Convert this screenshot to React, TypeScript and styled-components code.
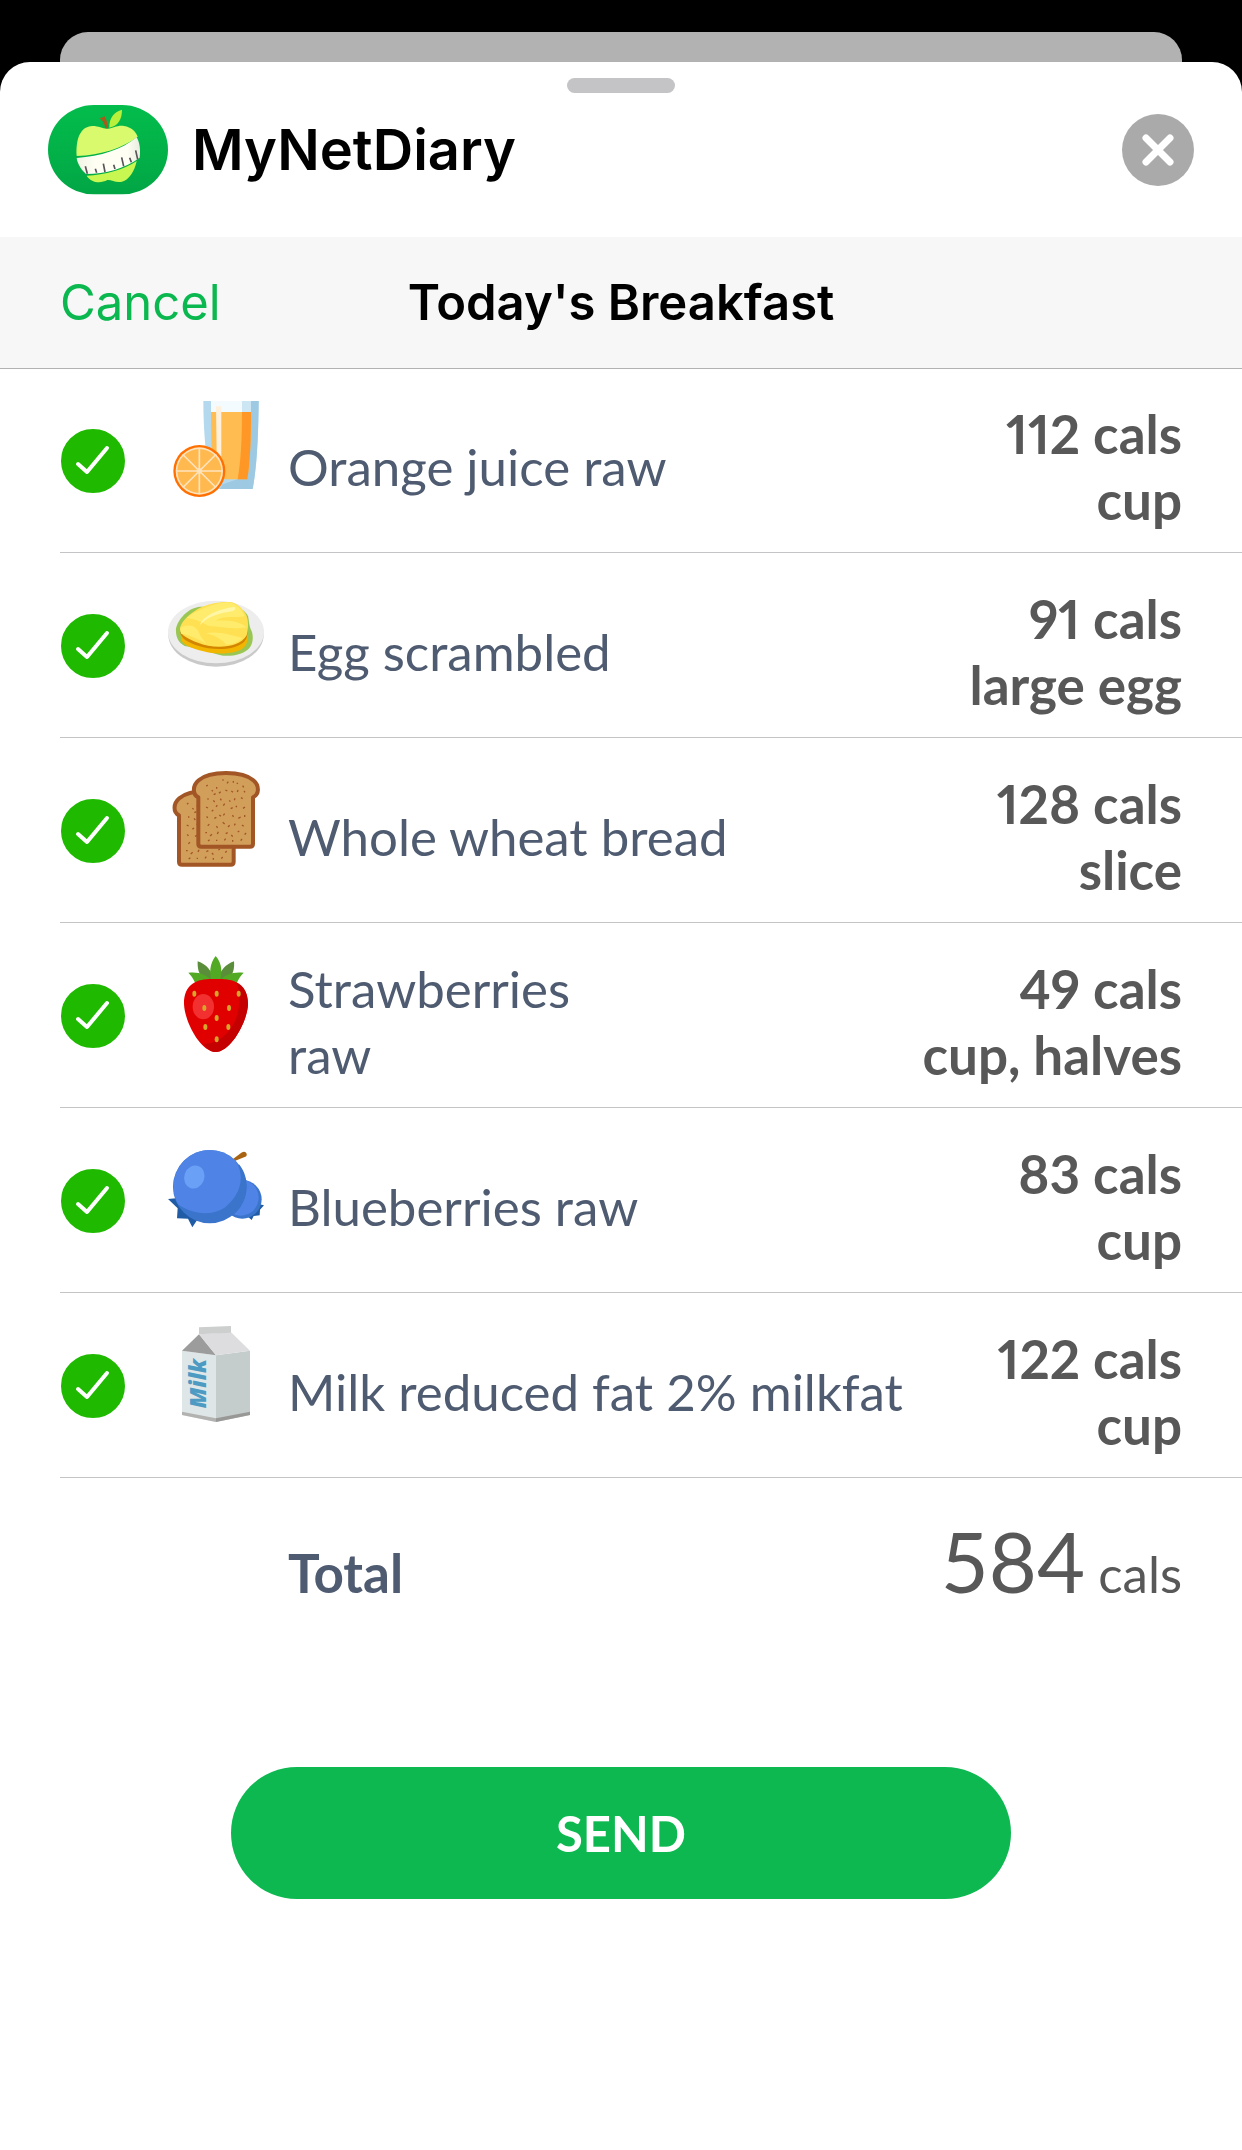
import React, { useState } from 'react';
import styled, { createGlobalStyle } from 'styled-components';

const GlobalStyle = createGlobalStyle`
  *, *::before, *::after { box-sizing: border-box; }
  body { margin: 0; background: #000; }
`;

const systemFont = 'Inter, Roboto, "Liberation Sans", sans-serif';
const brandFont = 'Lato, "Open Sans", "Liberation Sans", sans-serif';

const Page = styled.div`
  min-height: 100vh;
  padding-top: 32px;
  display: flex;
  flex-direction: column;
  background: #000;
`;

const BackSheet = styled.div`
  height: 30px;
  margin: 0 60px;
  background: #b2b2b2;
  border-radius: 28px 28px 0 0;
`;

const Sheet = styled.main`
  flex: 1;
  display: flex;
  flex-direction: column;
  background: #fff;
  border-radius: 30px 30px 0 0;
`;

const Grabber = styled.div`
  width: 108px;
  height: 15px;
  margin: 16px auto 0;
  border-radius: 8px;
  background: #c4c4c6;
`;

const AppHeader = styled.header`
  display: flex;
  align-items: center;
  gap: 24px;
  padding: 12px 48px 42px;
`;

const AppName = styled.h1`
  flex: 1;
  margin: 0;
  font: 600 56px/90px ${systemFont};
  color: #000;
`;

const CloseButton = styled.button`
  width: 72px;
  height: 72px;
  padding: 0;
  border: 0;
  border-radius: 50%;
  background: #aaa;
  cursor: pointer;
`;

const NavBar = styled.nav`
  display: grid;
  grid-template-columns: 1fr auto 1fr;
  align-items: center;
  min-height: 131px;
  padding: 0 60px;
  background: #f7f7f7;
  box-shadow: 0 1px 0 #b2b2b3;
`;

const CancelButton = styled.button`
  justify-self: start;
  padding: 0;
  border: 0;
  background: none;
  font: 400 49px/60px ${systemFont};
  color: #0bb84f;
  cursor: pointer;
`;

const NavTitle = styled.h2`
  margin: 0;
  font: 600 49px/60px ${systemFont};
  color: #000;
`;

const FoodList = styled.ul`
  margin: 0;
  padding: 0 0 0 60px;
  list-style: none;
`;

const FoodRow = styled.li`
  border-bottom: 1px solid #c4c4c6;
`;

const FoodLabel = styled.label`
  display: grid;
  grid-template-columns: 66px 96px 1fr auto;
  align-items: center;
  padding: 33px 60px 19px 0;
  cursor: pointer;
`;

const CheckCell = styled.span`
  display: grid;
  justify-content: center;
  padding-bottom: 12px;

  & > * { grid-area: 1 / 1; }
  & > svg { pointer-events: none; }
`;

const CheckInput = styled.input`
  appearance: none;
  width: 64px;
  height: 64px;
  margin: 0;
  border: 3px solid #c4c4c6;
  border-radius: 50%;
  cursor: pointer;

  &:checked {
    border-color: #1fba00;
    background: #1fba00;
  }
`;

const FoodPicture = styled.svg`
  align-self: start;
  width: 96px;
  height: 96px;
  margin-left: 42px;
  overflow: visible;
`;

const FoodName = styled.span`
  margin-left: 66px;
  font: 400 51px/66px ${brandFont};
  color: #4e5b70;
  white-space: pre-line;
`;

const Amount = styled.span`
  display: flex;
  flex-direction: column;
  align-items: flex-end;
  font: 700 53px/66px ${brandFont};
  font-variant-numeric: proportional-nums;
  color: #585858;
`;

const TotalRow = styled.section`
  display: flex;
  align-items: baseline;
  justify-content: space-between;
  padding: 34px 60px 0 288px;
`;

const TotalLabel = styled.span`
  font: 700 53px/66px ${brandFont};
  color: #4e5b70;
`;

const TotalValue = styled.span`
  font: 400 51px/98px ${brandFont};
  color: #585858;
`;

const TotalNumber = styled.span`
  font-size: 83px;
`;

const Footer = styled.footer`
  display: flex;
  justify-content: center;
  padding: 144px 60px;
`;

const SendButton = styled.button`
  width: 100%;
  max-width: 780px;
  padding: 33px 0;
  border: 0;
  border-radius: 66px;
  background: #0cb84f;
  font: 700 49px/66px ${brandFont};
  color: #fff;
  cursor: pointer;
`;

const Logo = () => (
  <svg width="120" height="90" viewBox="0 0 360 270" aria-hidden="true">
    <defs>
      <linearGradient id="logoGreen" x1="0" y1="0" x2="0" y2="1">
        <stop offset="0" stopColor="#03bd4c" />
        <stop offset="1" stopColor="#02a645" />
      </linearGradient>
      <linearGradient id="tape" x1="0" y1="0" x2="1" y2="0">
        <stop offset="0" stopColor="#f0f3e4" />
        <stop offset="0.3" stopColor="#fffff4" />
        <stop offset="0.8" stopColor="#fffff4" />
        <stop offset="1" stopColor="#e9ecdf" />
      </linearGradient>
    </defs>
    <rect width="360" height="268" rx="138" ry="134" fill="url(#logoGreen)" />
    <path d="M86 153C83 100 98 64 133 63C154 63 163 72 180 71C197 70 207 60 228 63C250 67 263 79 269 95C222 130 160 150 86 153Z" fill="#d9fa6c" />
    <path d="M86 159C158 154 222 134 266 97C275 112 278 134 275 158C232 190 172 207 114 207C98 192 88 175 86 159Z" fill="url(#tape)" />
    <path d="M116 212C170 210 230 194 266 168C260 198 243 225 222 230C202 234 192 224 178 225C160 235 132 236 116 212Z" fill="#c9f751" />
    <path d="M155 40L166 36L170 34C176 46 180 58 180 70H172C170 56 164 46 155 40Z" fill="#a85a1a" />
    <path d="M184 68C183 38 199 20 222 14C222 42 211 62 184 68Z" fill="#b9f03c" />
    <path d="M112 184L118 206M142 191L146 203M166 176L171 201M197 179L201 192M221 157L227 184M245 158L250 172M263 136L269 163" stroke="#59545a" strokeWidth="5" />
  </svg>
);

const CloseIcon = () => (
  <svg width="72" height="72" viewBox="0 0 72 72" aria-hidden="true">
    <path d="M24 24L48 48M48 24L24 48" stroke="#fff" strokeWidth="7" strokeLinecap="round" />
  </svg>
);

const CheckMark = () => (
  <svg width="64" height="64" viewBox="0 0 64 64" fill="none" aria-hidden="true">
    <path d="M17 35L26 43L46 19" stroke="#fff" strokeWidth="4" strokeLinecap="round" strokeLinejoin="round" />
  </svg>
);

const Juice = () => (
  <>
    <path d="M106 0H272C271 90 268 190 254 264H130C114 180 106 90 106 0Z" fill="#b4d9ee" />
    <path d="M222 0H272C271 90 268 190 254 264H156L164 250L208 235Z" fill="#9dc9e3" />
    <path d="M129 0H222V33H129Z" fill="#f3fbfe" />
    <path d="M222 0H249V33H222Z" fill="#cde6f4" />
    <path d="M129 33H249C249 110 247 180 238 235H140C131 180 129 110 129 33Z" fill="#ffbc51" />
    <path d="M222 33H249C249 110 247 180 238 235H209C219 180 222 110 222 33Z" fill="#ff9726" />
    <path d="M144 16H160V190L146 160Z" fill="#fff0db" />
    <circle cx="94" cy="210" r="78" fill="#ff7000" />
    <circle cx="94" cy="210" r="71" fill="#ffe3bd" />
    <circle cx="94" cy="210" r="66" fill="#ffb94f" />
    <path d="M94 142V278M26 210H162M46 162L142 258M142 162L46 258" stroke="#ffe3bd" strokeWidth="5" />
    <circle cx="94" cy="210" r="8" fill="#ffe3bd" />
  </>
);

const Egg = () => (
  <>
    <ellipse cx="144" cy="146" rx="143" ry="96" fill="#c9c9c9" />
    <ellipse cx="144" cy="138" rx="144" ry="94" fill="#ededed" />
    <path d="M24 136C22 108 56 72 80 66C94 60 110 64 130 60C180 48 226 62 240 90C244 106 242 118 252 138C258 160 252 182 238 192C218 208 180 214 152 206C110 194 70 184 50 180C30 170 24 152 24 136Z" fill="#9ac654" />
    <path d="M38 144L239 122C240 150 240 166 232 180C212 206 146 207 106 196C72 188 42 176 40 160Z" fill="#f3b600" />
    <path d="M37 138L240 112C240 146 238 158 228 168C196 196 130 192 92 180C60 170 38 158 37 138Z" fill="#d38500" />
    <path d="M36 132C34 112 62 86 88 70C120 52 156 46 186 48C208 50 222 68 232 82C242 98 242 128 236 148C214 188 136 190 90 170C62 160 38 148 36 132Z" fill="#ffe052" />
    <path d="M56 96C84 74 130 54 176 49C204 50 222 70 230 90C204 98 172 86 142 104C180 102 216 106 236 124C200 132 160 122 124 120C104 112 84 98 56 96Z" fill="#ffec6d" />
    <path d="M37 126C66 110 84 122 92 138C98 152 104 160 114 172C84 156 62 146 40 144Z" fill="#ffec6d" />
    <path d="M112 142C148 134 184 146 224 156C208 170 190 176 176 176C160 160 142 148 112 142Z" fill="#ffec6d" />
    <path d="M96 117C106 88 154 68 200 63C206 72 196 76 180 78C140 84 116 96 96 117Z" fill="#fff6a6" />
  </>
);

const SLICE =
  'M91 79C73 70 73 44 92 28C112 10 145 6 174 6C203 6 236 10 256 28C275 44 274 70 255 79V218Q255 227 246 227H100Q91 227 91 218Z';
const CRUMBS =
  'M119 42l-4 4M131 58l4 3M146 48v5M163 27h4M181 32l-4 5M196 30v5M206 36l4 2M224 44l3 5M137 71l6-3M158 62l-5 5M172 57l6 3M190 60l5 4M210 57l-2 6M228 60l3 4M118 84h4M136 88l4 5M157 83l3 5M166 104l4-6M184 88l3 4M201 82l-2 6M219 80l5 3M114 108l6 3M131 121l5-4M148 103l-4 4M188 113l6-3M206 104l-2 5M225 112l6-4M116 136l3 5M139 142l6-3M154 132l5 4M170 128l-4 5M193 133l4 4M211 142l7-4M230 132v6M119 164l5-4M145 166l4 4M164 154l6 5M180 168l5-5M202 158l-3 5M222 162l5 4M112 185h5M132 190l-6 5M151 182l-3 7M173 188l6-3M190 192l4 5M214 180l-5 3M234 186l-4 5M120 210l5-4M144 208h4M169 208l4-5M194 212v-5M218 209l4-5';

const Bread = () => (
  <>
    {[{ x: -58, y: 54 }, { x: 0, y: 0 }].map(({ x, y }) => (
      <g key={x} transform={`translate(${x} ${y})`}>
        <path d={SLICE} fill="#d29f5b" stroke="#a25626" strokeWidth="12" strokeLinejoin="round" />
        <path d={CRUMBS} stroke="#a25626" strokeWidth="4" />
      </g>
    ))}
  </>
);

const SEEDS = [[79, 113], [146, 113], [212, 113], [109, 156], [183, 156], [146, 186], [112, 213], [181, 213], [146, 250]];

const Strawberry = () => (
  <>
    <path d="M112 74C92 58 88 38 89 16C116 26 132 42 136 74ZM176 74C196 58 200 38 198 16C172 26 156 42 150 74Z" fill="#5b8e3a" />
    <path d="M82 82C76 66 68 58 61 50C92 46 116 56 134 76ZM206 82C212 66 220 58 227 50C196 46 170 56 152 76Z" fill="#52a923" />
    <path d="M143 0C164 24 162 52 156 76H130C124 52 124 24 143 0Z" fill="#52a923" />
    <path d="M143 69C190 67 240 76 240 144C238 198 188 288 143 288C98 288 50 198 48 144C48 76 96 67 143 69Z" fill="#e10000" />
    <path d="M206 80C228 92 240 112 240 144C238 198 188 288 143 288C130 288 116 278 106 263C180 266 236 170 206 80Z" fill="#c50000" />
    <ellipse cx="106" cy="152" rx="32" ry="38" fill="#f23030" />
    {SEEDS.map(([x, y]) => (
      <ellipse key={`${x}-${y}`} cx={x} cy={y} rx="6" ry="9" fill="#d8a52b" />
    ))}
  </>
);

const Blueberry = () => (
  <>
    <path d="M0 174L40 170L92 230L73 259L60 233L27 232L29 202Z" fill="#205ca5" />
    <path d="M288 193L275 190L238 226L251 237L257 225L275 223L276 206Z" fill="#205ca5" />
    <circle cx="223" cy="175" r="58" fill="#3a74cb" />
    <circle cx="218" cy="170" r="54" fill="#4f84e6" />
    <path d="M192 56L220 35Q232 29 236 38Q238 46 228 49L200 60Z" fill="#a96412" />
    <path d="M213 70C250 116 242 186 192 225L170 190Z" fill="#3a74cb" />
    <circle cx="125" cy="137" r="110" fill="#3a74cb" />
    <path d="M125 27A110 110 0 0 1 202 58C232 105 220 160 170 200C125 228 70 218 30 190A110 110 0 0 1 125 27Z" fill="#4f84e6" />
    <ellipse cx="79" cy="108" rx="30" ry="35" transform="rotate(20 79 108)" fill="#6aa1f6" />
  </>
);

const MilkText = styled.text`
  font: italic 800 68px "Open Sans", "Noto Sans", sans-serif;
  fill: #4d9bc3;
`;

const Milk = () => (
  <>
    <path d="M42 74L144 88V288L42 267Z" fill="#dfe6e7" />
    <path d="M144 88L246 74V267L144 288Z" fill="#c5cccc" />
    <path d="M42 257L144 277V288L42 267Z" fill="#b2b3b1" />
    <path d="M144 277L246 257V267L144 288Z" fill="#989996" />
    <path d="M93 25L144 88L42 74Z" fill="#9c9c9c" />
    <path d="M93 25L189 19L246 74L144 88Z" fill="#dddde0" />
    <path d="M93 4L189 0V20L93 25Z" fill="#cdcfcf" />
    <MilkText transform="translate(114 247) rotate(-90)">Milk</MilkText>
  </>
);

const foods = [
  { name: 'Orange juice raw', cals: 112, unit: 'cup', Picture: Juice },
  { name: 'Egg scrambled', cals: 91, unit: 'large egg', Picture: Egg },
  { name: 'Whole wheat bread', cals: 128, unit: 'slice', Picture: Bread },
  { name: 'Strawberries\nraw', cals: 49, unit: 'cup, halves', Picture: Strawberry },
  { name: 'Blueberries raw', cals: 83, unit: 'cup', Picture: Blueberry },
  { name: 'Milk reduced fat 2% milkfat', cals: 122, unit: 'cup', Picture: Milk },
];

export default function App() {
  const [picked, setPicked] = useState<boolean[]>(foods.map(() => true));
  const total = foods.reduce((sum, food, i) => (picked[i] ? sum + food.cals : sum), 0);
  const shownTotal = total > 0 ? total - 1 : 0;

  const toggle = (index: number) =>
    setPicked((current) => current.map((on, i) => (i === index ? !on : on)));

  return (
    <>
      <GlobalStyle />
      <Page>
        <BackSheet />
        <Sheet>
          <Grabber />
          <AppHeader>
            <Logo />
            <AppName>MyNetDiary</AppName>
            <CloseButton type="button" aria-label="Close">
              <CloseIcon />
            </CloseButton>
          </AppHeader>
          <NavBar>
            <CancelButton type="button">Cancel</CancelButton>
            <NavTitle>Today's Breakfast</NavTitle>
          </NavBar>
          <FoodList>
            {foods.map(({ name, cals, unit, Picture }, index) => (
              <FoodRow key={name}>
                <FoodLabel>
                  <CheckCell>
                    <CheckInput type="checkbox" checked={picked[index]} onChange={() => toggle(index)} />
                    <CheckMark />
                  </CheckCell>
                  <FoodPicture viewBox="0 0 288 288" aria-hidden="true">
                    <Picture />
                  </FoodPicture>
                  <FoodName>{name}</FoodName>
                  <Amount>
                    <span>{cals} cals</span>
                    <span>{unit}</span>
                  </Amount>
                </FoodLabel>
              </FoodRow>
            ))}
          </FoodList>
          <TotalRow>
            <TotalLabel>Total</TotalLabel>
            <TotalValue>
              <TotalNumber>{shownTotal}</TotalNumber> cals
            </TotalValue>
          </TotalRow>
          <Footer>
            <SendButton type="button">SEND</SendButton>
          </Footer>
        </Sheet>
      </Page>
    </>
  );
}
